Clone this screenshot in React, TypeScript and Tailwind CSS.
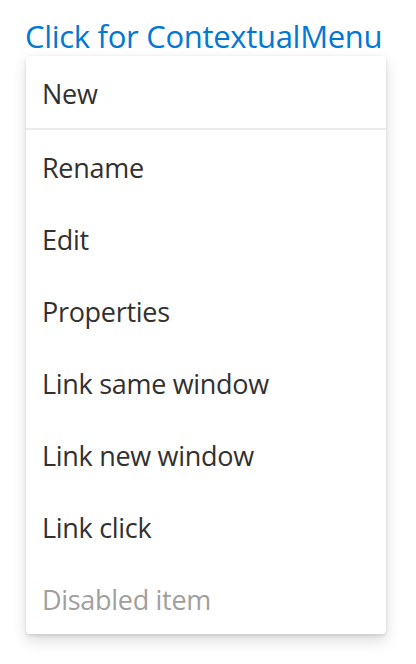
import React from "react";

const items = [
  "Rename",
  "Edit",
  "Properties",
  "Link same window",
  "Link new window",
  "Link click",
];

export default function App() {
  return (
    <div className="min-h-[664px] bg-white font-['Open_Sans',sans-serif]">
      <div className="pl-[25px] pt-[16px]">
        <button className="h-[40px] text-[31px] leading-[40px] text-[#0078d4] tracking-[-0.3px]">
          Click for ContextualMenu
        </button>
      </div>
      <div className="ml-[26px] w-[360px] rounded-[4px] bg-white shadow-[0_6.4px_14.4px_rgba(0,0,0,0.132),0_1.2px_3.6px_rgba(0,0,0,0.108)]">
        <div className="flex h-[72px] items-center px-[16px] pt-[5px] text-[27px] text-[#323130] tracking-[-0.3px]">
          New
        </div>
        <div className="h-[2px] bg-[#edebe9]" />
        {items.map((label) => (
          <div
            key={label}
            className="flex h-[72px] items-center px-[16px] pt-[5px] text-[27px] text-[#323130] tracking-[-0.3px]"
          >
            {label}
          </div>
        ))}
        <div className="flex h-[72px] items-center px-[16px] pt-[5px] text-[27px] text-[#a19f9d] tracking-[-0.3px]">
          Disabled item
        </div>
      </div>
    </div>
  );
}
